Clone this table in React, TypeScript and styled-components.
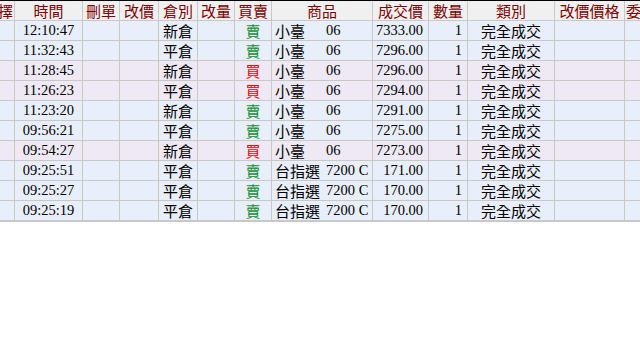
import React from 'react';
import styled, {createGlobalStyle} from 'styled-components';

const GlobalStyle = createGlobalStyle`
	html, body {
		margin: 0;
		padding: 0;
		background: #ffffff;
	}
	#root {
		width: 640px;
		height: 350px;
		overflow: hidden;
	}
`;

type Side = 'buy' | 'sell';

interface Trade {
	time: string;
	open: string;
	side: Side;
	name: string;
	code: string;
	price: string;
	qty: number;
}

const trades: Trade[] = [
	{time: '12:10:47', open: '新倉', side: 'sell', name: '小臺', code: '06', price: '7333.00', qty: 1},
	{time: '11:32:43', open: '平倉', side: 'sell', name: '小臺', code: '06', price: '7296.00', qty: 1},
	{time: '11:28:45', open: '新倉', side: 'buy', name: '小臺', code: '06', price: '7296.00', qty: 1},
	{time: '11:26:23', open: '平倉', side: 'buy', name: '小臺', code: '06', price: '7294.00', qty: 1},
	{time: '11:23:20', open: '新倉', side: 'sell', name: '小臺', code: '06', price: '7291.00', qty: 1},
	{time: '09:56:21', open: '平倉', side: 'sell', name: '小臺', code: '06', price: '7275.00', qty: 1},
	{time: '09:54:27', open: '新倉', side: 'buy', name: '小臺', code: '06', price: '7273.00', qty: 1},
	{time: '09:25:51', open: '平倉', side: 'sell', name: '台指選', code: '7200 C', price: '171.00', qty: 1},
	{time: '09:25:27', open: '平倉', side: 'sell', name: '台指選', code: '7200 C', price: '170.00', qty: 1},
	{time: '09:25:19', open: '平倉', side: 'sell', name: '台指選', code: '7200 C', price: '170.00', qty: 1},
];

const COLS = '15px 68px 37px 39px 39px 37px 37px 101px 56px 39px 87px 70px 60px';

const Table = styled.div`
	width: 690px;
	border-top: 1px solid #000000;
	border-bottom: 2px solid #c8c8c8;
	font-family: 'Liberation Serif', 'Noto Sans CJK TC', serif;
`;

const HeaderRow = styled.div`
	display: grid;
	grid-template-columns: ${COLS};
	height: 19px;
	background: #f0f0f0;
	border-bottom: 1px solid #c8c8c8;
`;

const Row = styled.div<{$side: Side}>`
	display: grid;
	grid-template-columns: ${COLS};
	height: 19px;
	background: ${(p) => (p.$side === 'buy' ? '#efe9f6' : '#e8eefa')};
	border-bottom: 1px solid #c8c8c8;
	&:last-child {
		border-bottom: none;
	}
`;

const Head = styled.div<{$align?: 'left' | 'right' | 'center'}>`
	display: flex;
	align-items: center;
	justify-content: ${(p) =>
		p.$align === 'right' ? 'flex-end' : p.$align === 'left' ? 'flex-start' : 'center'};
	border-right: 1px solid #c8c8c8;
	overflow: hidden;
	white-space: nowrap;
	color: #800000;
	font-family: 'Noto Sans CJK TC', sans-serif;
	font-size: 15px;
	padding: 0 1px;
`;

const Cell = styled.div<{$align?: 'left' | 'right' | 'center'; $color?: string; $cjk?: boolean}>`
	display: flex;
	align-items: center;
	justify-content: ${(p) =>
		p.$align === 'right' ? 'flex-end' : p.$align === 'left' ? 'flex-start' : 'center'};
	padding: ${(p) => (p.$align === 'right' ? '0 5px 0 0' : p.$align === 'left' ? '0 0 0 3px' : '0')};
	border-right: 1px solid #c8c8c8;
	overflow: hidden;
	white-space: nowrap;
	color: ${(p) => p.$color ?? '#000000'};
	font-family: ${(p) =>
		p.$cjk ? "'Noto Sans CJK TC', sans-serif" : "'Liberation Serif', 'Noto Sans CJK TC', serif"};
	font-size: ${(p) => (p.$cjk ? '15px' : '14.5px')};
`;

const ProductName = styled.span`
	display: inline-block;
	width: 51px;
	font-family: 'Noto Sans CJK TC', sans-serif;
	font-size: 15px;
`;

const ProductCode = styled.span`
	font-family: 'Liberation Serif', serif;
	font-size: 14.5px;
`;

const headers: {label: string; align?: 'left' | 'right' | 'center'}[] = [
	{label: '選擇', align: 'right'},
	{label: '時間'},
	{label: '刪單'},
	{label: '改價'},
	{label: '倉別'},
	{label: '改量'},
	{label: '買賣'},
	{label: '商品'},
	{label: '成交價'},
	{label: '數量'},
	{label: '類別'},
	{label: '改價價格'},
	{label: '委託', align: 'left'},
];

const App = () => {
	return (
		<>
			<GlobalStyle />
			<Table>
				<HeaderRow>
					{headers.map((h, i) => (
						<Head key={i} $align={h.align}>
							{h.label}
						</Head>
					))}
				</HeaderRow>
				{trades.map((t, i) => (
					<Row key={i} $side={t.side}>
						<Cell />
						<Cell>{t.time}</Cell>
						<Cell />
						<Cell />
						<Cell $cjk>{t.open}</Cell>
						<Cell />
						<Cell $cjk $color={t.side === 'buy' ? '#ff0000' : '#119133'}>
							{t.side === 'buy' ? '買' : '賣'}
						</Cell>
						<Cell $align="left">
							<ProductName>{t.name}</ProductName>
							<ProductCode>{t.code}</ProductCode>
						</Cell>
						<Cell $align="right">{t.price}</Cell>
						<Cell $align="right">{t.qty}</Cell>
						<Cell $cjk>完全成交</Cell>
						<Cell />
						<Cell />
					</Row>
				))}
			</Table>
		</>
	);
};

export default App;
